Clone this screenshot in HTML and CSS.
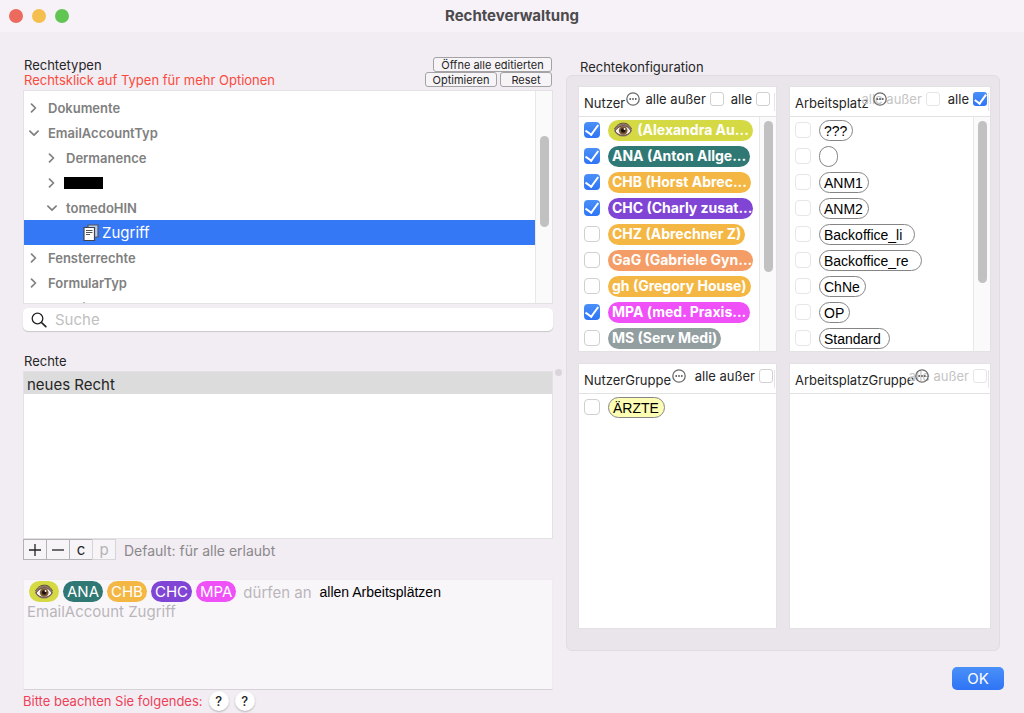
FILE: index.html
```html
<!DOCTYPE html>
<html lang="de">
<head>
<meta charset="utf-8">
<title>Rechteverwaltung</title>
<link rel="stylesheet" href="styles.css">
</head>
<body>
<svg class="defs" aria-hidden="true">
  <symbol id="eye" viewBox="0 0 20 16">
    <path d="M1 8.5C3.5 3.5 7 1.500 10.500 1.500S17 4 19 8.500C17 12.500 14 14.500 10 14.500S3 12.500 1 8.500Z" fill="#8c7468"/>
    <path d="M2 9C4.500 5.500 7 4 10.300 4S16 5.500 18 9C16 12 13.500 13.200 10 13.200S4 12 2 9Z" fill="#f6f1ee" stroke="#4a3a34" stroke-width=".8"/>
    <circle cx="10.200" cy="8.500" r="4.300" fill="#7d5530"/>
    <circle cx="10.200" cy="8.500" r="2.300" fill="#1c1411"/>
    <circle cx="11.500" cy="7" r=".9" fill="#fff"/>
    <path d="M1.500 7C4 2.500 7 1.200 10.500 1.200S16.500 3 18.500 7" fill="none" stroke="#5c4840" stroke-width="1"/>
  </symbol>
  <symbol id="more" viewBox="0 0 14 14">
    <circle cx="7" cy="7" r="6.200" fill="none" stroke="#6b6b6b" stroke-width="1.300"/>
    <circle cx="4.200" cy="7" r=".9" fill="#555"/><circle cx="7" cy="7" r=".9" fill="#555"/><circle cx="9.800" cy="7" r=".9" fill="#555"/>
  </symbol>
  <symbol id="right" viewBox="0 0 10 10">
    <path d="M2.500 1.200 6.500 5 2.500 8.800" fill="none" stroke="#808080" stroke-width="1.700" stroke-linecap="round" stroke-linejoin="round"/>
  </symbol>
  <symbol id="down" viewBox="0 0 10 10">
    <path d="M.9 3.200 5 7.200 9.100 3.200" fill="none" stroke="#808080" stroke-width="1.700" stroke-linecap="round" stroke-linejoin="round"/>
  </symbol>
</svg>
<div class="window">
  <header class="titlebar">
    <div class="lights"><span class="light light-close"></span><span class="light light-min"></span><span class="light light-max"></span></div>
    <h1 class="title">Rechteverwaltung</h1>
  </header>
  <main class="main">
    <section class="left">
      <div class="types-head">
        <div>
          <h2 class="label">Rechtetypen</h2>
          <p class="hint">Rechtsklick auf Typen für mehr Optionen</p>
        </div>
        <div class="tools">
          <button class="tool tool-wide">Öffne alle editierten</button>
          <button class="tool tool-mid">Optimieren</button>
          <button class="tool">Reset</button>
        </div>
      </div>
      <div class="tree">
        <ul class="rows">
          <li class="row"><svg class="chev"><use href="#right"/></svg>Dokumente</li>
          <li class="row"><svg class="chev"><use href="#down"/></svg>EmailAccountTyp</li>
          <li class="row row-sub"><svg class="chev"><use href="#right"/></svg>Dermanence</li>
          <li class="row row-sub"><svg class="chev"><use href="#right"/></svg><span class="redacted"></span></li>
          <li class="row row-sub"><svg class="chev"><use href="#down"/></svg>tomedoHIN</li>
          <li class="row row-active">
            <svg class="doc" viewBox="0 0 16 18"><path d="M5 3V1H15V13H12.500" fill="#b9cbef" stroke="#555" stroke-width="1.200"/><path d="M1 3.500H11.500V16.500H1Z" fill="#fff" stroke="#444" stroke-width="1.200"/><path d="M3 6.500H9.500M3 8.500H9.500M3 10.500H7" stroke="#555" stroke-width="1"/></svg>Zugriff</li>
          <li class="row"><svg class="chev"><use href="#right"/></svg>Fensterrechte</li>
          <li class="row"><svg class="chev"><use href="#right"/></svg>FormularTyp</li>
          <li class="row"><svg class="chev"><use href="#right"/></svg>Kartei</li>
        </ul>
        <div class="track"><div class="thumb thumb-tree"></div></div>
      </div>
      <label class="search">
        <svg class="lens" viewBox="0 0 16 16"><circle cx="6.500" cy="6.500" r="5.300" fill="none" stroke="#222" stroke-width="1.300"/><path d="M10.500 10.500 14.800 14.600" stroke="#222" stroke-width="1.700" stroke-linecap="round"/></svg>
        <input class="search-input" type="text" placeholder="Suche" aria-label="Suche">
      </label>
      <h2 class="label label-rights">Rechte</h2>
      <div class="rights"><div class="right-item">neues Recht</div><span class="handle"></span></div>
      <div class="actions">
        <button class="act" aria-label="Hinzufügen"><svg class="sign" viewBox="0 0 12 12"><path d="M6 0V12M0 6H12" stroke="#222" stroke-width="1.300"/></svg></button>
        <button class="act" aria-label="Entfernen"><svg class="sign" viewBox="0 0 12 12"><path d="M0 6H12" stroke="#222" stroke-width="1.300"/></svg></button>
        <button class="act">c</button>
        <button class="act" disabled>p</button>
        <span class="default">Default: für alle erlaubt</span>
      </div>
      <div class="summary">
        <div class="tokens">
          <span class="token lime"><svg class="eye"><use href="#eye"/></svg></span>
          <span class="token teal">ANA</span>
          <span class="token amber">CHB</span>
          <span class="token violet">CHC</span>
          <span class="token pink">MPA</span>
          <span class="may">dürfen an</span>
          <span class="places">allen Arbeitsplätzen</span>
        </div>
        <div class="object">EmailAccount Zugriff</div>
      </div>
      <div class="note"><span>Bitte beachten Sie folgendes:</span><button class="help">?</button><button class="help">?</button></div>
    </section>
    <section class="right">
      <h2 class="label label-config">Rechtekonfiguration</h2>
      <div class="panel">
        <section class="box">
          <header class="box-head">
            <h3 class="box-title">Nutzer</h3><svg class="more"><use href="#more"/></svg>
            <div class="opts opts-user"><label class="opt">alle außer<input class="check check-s" type="checkbox"></label><label class="opt">alle<input class="check check-s" type="checkbox"></label></div>
          </header>
          <div class="box-body">
            <ul class="list">
              <li><label class="item"><input class="check" type="checkbox" checked><span class="pill lime"><svg class="eye"><use href="#eye"/></svg> (Alexandra Au...</span></label></li>
              <li><label class="item"><input class="check" type="checkbox" checked><span class="pill teal">ANA (Anton Allge...</span></label></li>
              <li><label class="item"><input class="check" type="checkbox" checked><span class="pill amber">CHB (Horst Abrec...</span></label></li>
              <li><label class="item"><input class="check" type="checkbox" checked><span class="pill violet">CHC (Charly zusat...</span></label></li>
              <li><label class="item"><input class="check" type="checkbox"><span class="pill amber">CHZ (Abrechner Z)</span></label></li>
              <li><label class="item"><input class="check" type="checkbox"><span class="pill orange">GaG (Gabriele Gyn...</span></label></li>
              <li><label class="item"><input class="check" type="checkbox"><span class="pill amber">gh (Gregory House)</span></label></li>
              <li><label class="item"><input class="check" type="checkbox" checked><span class="pill pink">MPA (med. Praxis...</span></label></li>
              <li><label class="item"><input class="check" type="checkbox"><span class="pill gray">MS (Serv Medi)</span></label></li>
            </ul>
            <div class="track"><div class="thumb thumb-user"></div></div>
          </div>
        </section>
        <section class="box">
          <header class="box-head box-head-place">
            <h3 class="box-title">Arbeitsplatz</h3><svg class="more"><use href="#more"/></svg>
            <div class="opts"><label class="opt opt-off">alle außer<input class="check check-s" type="checkbox" disabled></label><label class="opt">alle<input class="check check-s" type="checkbox" checked></label></div>
          </header>
          <div class="box-body">
            <ul class="list">
              <li><label class="item"><input class="check" type="checkbox" disabled><span class="place">???</span></label></li>
              <li><label class="item"><input class="check" type="checkbox" disabled aria-label="Ohne Namen"><span class="place"></span></label></li>
              <li><label class="item"><input class="check" type="checkbox" disabled><span class="place">ANM1</span></label></li>
              <li><label class="item"><input class="check" type="checkbox" disabled><span class="place">ANM2</span></label></li>
              <li><label class="item"><input class="check" type="checkbox" disabled><span class="place place-long">Backoffice_li</span></label></li>
              <li><label class="item"><input class="check" type="checkbox" disabled><span class="place place-long">Backoffice_re</span></label></li>
              <li><label class="item"><input class="check" type="checkbox" disabled><span class="place">ChNe</span></label></li>
              <li><label class="item"><input class="check" type="checkbox" disabled><span class="place">OP</span></label></li>
              <li><label class="item"><input class="check" type="checkbox" disabled><span class="place place-mid">Standard</span></label></li>
            </ul>
            <div class="track"><div class="thumb thumb-place"></div></div>
          </div>
        </section>
        <section class="box">
          <header class="box-head">
            <h3 class="box-title">NutzerGruppe</h3><svg class="more"><use href="#more"/></svg>
            <div class="opts"><label class="opt">alle außer<input class="check check-s" type="checkbox"></label></div>
          </header>
          <ul class="list">
            <li><label class="item"><input class="check" type="checkbox"><span class="place group">ÄRZTE</span></label></li>
          </ul>
        </section>
        <section class="box">
          <header class="box-head">
            <h3 class="box-title">ArbeitsplatzGruppe</h3><svg class="more"><use href="#more"/></svg>
            <div class="opts"><label class="opt opt-off">alle außer<input class="check check-s" type="checkbox" disabled></label></div>
          </header>
        </section>
      </div>
      <button class="ok">OK</button>
    </section>
  </main>
</div>
</body>
</html>
```
FILE: styles.css
```css
* { box-sizing: border-box; }
body { margin: 0; background: #f2edf3; color: #262626; font: 13px/16px Inter, sans-serif; }
h1, h2, h3, p, ul { margin: 0; padding: 0; font-weight: 400; list-style: none; }
button, input { font: inherit; color: inherit; margin: 0; }
.defs { display: none; }

.window { display: flex; flex-direction: column; min-height: 100vh; }
.titlebar { display: grid; grid-template-columns: 1fr auto 1fr; align-items: center; height: 32px; padding: 0 9px; background: #f7f2f8; }
.lights { display: flex; gap: 9px; }
.light { width: 14px; height: 14px; border-radius: 50%; }
.light-close { background: #ed6a5e; }
.light-min { background: #f5bf4f; }
.light-max { background: #61c554; }
.title { font-size: 15px; font-weight: 700; color: #4c4a4d; }

.main { flex: 1; display: grid; grid-template-columns: minmax(0, 530fr) minmax(0, 434fr); gap: 13px; padding: 25px 24px 2px 23px; }
.left, .right { display: flex; flex-direction: column; }
.label { font-size: 13px; line-height: 16px; }

.types-head { display: flex; justify-content: space-between; height: 33px; padding: 0 1px; }
.hint { line-height: 14px; color: #fa4a3c; }
.tools { display: flex; flex-wrap: wrap; justify-content: flex-end; column-gap: 3px; width: 130px; align-content: flex-start; }
.tool { height: 15px; width: 52px; padding: 0; font-size: 11px; line-height: 12px; border: 1px solid #a5a2a6; border-radius: 3px; background: #f7f4f8; white-space: nowrap; }
.tool-wide { width: 119px; }
.tool-mid { width: 72px; }

.tree { display: flex; height: 214px; background: #fff; border: 1px solid #e4e1e5; overflow: hidden; }
.rows { flex: 1; padding-top: 4px; }
.row { display: flex; align-items: center; gap: 9px; height: 25px; padding-left: 5px; color: #808080; font-weight: 600; white-space: nowrap; }
.row-sub { padding-left: 23px; }
.row-active { padding-left: 59px; gap: 3px; background: #3478f6; color: #fff; font-size: 15px; font-weight: 400; }
.chev { width: 10px; height: 10px; }
.doc { width: 16px; height: 18px; }
.redacted { width: 39px; height: 12px; margin-left: -2px; background: #000; }
.track { width: 17px; padding: 4px 4px 0; background: #fafafa; border-left: 1px solid #e8e8e8; }
.thumb { width: 9px; border-radius: 5px; background: #c1c1c1; }
.thumb-tree { height: 91px; margin-top: 41px; }
.thumb-user { height: 151px; }
.thumb-place { height: 162px; }

.search { display: flex; align-items: center; gap: 8px; height: 23px; margin-top: 4px; padding-left: 8px; background: #fff; border-radius: 5px; box-shadow: 0 1px 1px #c9c5ca; }
.lens { width: 16px; height: 16px; }
.search-input { flex: 1; min-width: 0; border: 0; padding: 0; background: none; font-size: 15px; outline: 0; }
.search-input::placeholder { color: #bfbfbf; }

.label-rights { margin: 22px 0 2px; padding-left: 1px; }
.rights { position: relative; flex: 1; min-height: 80px; background: #fff; border: 1px solid #e4e1e5; }
.right-item { height: 22px; padding-left: 3px; line-height: 25px; font-size: 15px; background: #dcdcdc; }
.handle { position: absolute; right: -10px; top: -3px; width: 7px; height: 7px; border-radius: 50%; background: #d9d5da; }
.actions { display: flex; align-items: center; height: 21px; }
.act { width: 24px; height: 21px; margin-right: -1px; padding: 0; font-size: 15px; line-height: 18px; border: 1px solid #b5b2b6; background: #f7f4f8; }
.act:disabled { border-color: #d8d5d9; color: #b5b2b6; }
.sign { display: block; width: 12px; height: 12px; margin: 0 auto; }
.default { margin-left: 9px; padding-top: 3px; font-size: 14px; color: #8b888c; }
.summary { height: 111px; margin-top: 19px; padding: 1px 3px; background: #f9f6fa; border: 1px solid #efebf0; border-bottom-color: #d5d2d6; font-size: 15px; }
.tokens { display: flex; align-items: center; gap: 4px; padding-left: 2px; white-space: nowrap; }
.token { height: 21px; padding: 0 4px; border-radius: 11px; line-height: 22px; color: #fff; }
.eye { width: 22px; height: 16px; vertical-align: -3px; }
.may, .object { color: #b9b6ba; }
.may { margin-left: 3px; padding-top: 3px; }
.places { margin-left: 4px; color: #000; font: 14px/16px "Liberation Sans", sans-serif; }
.object { line-height: 20px; }
.note { display: flex; align-items: center; gap: 6px; height: 20px; margin-top: 1px; color: #ee3f58; }
.help { width: 20px; height: 20px; padding: 0; border: 0; border-radius: 50%; background: #fff; box-shadow: 0 1px 2px #b5b2b6; color: #222; font-weight: 500; }

.label-config { margin: 2px 0 0; padding-left: 14px; }
.panel { flex: 1; display: grid; grid-template-columns: minmax(0, 199fr) minmax(0, 202fr); grid-template-rows: 267fr 266fr; gap: 11px 12px; padding: 10px 8px 21px 11px; background: #e9e5ea; border: 1px solid #e0dce1; border-radius: 6px; }
.box { display: flex; flex-direction: column; background: #fff; border: 1px solid #e4e1e5; }
.box-head { position: relative; display: flex; align-items: center; gap: 1px; height: 30px; padding-left: 5px; border-bottom: 1px solid #e2e2e2; }
.box-head-place { gap: 4px; }
.box-head::after { content: ""; position: absolute; right: 1px; top: 6px; width: 1px; height: 18px; background: #e5e5e5; }
.box-title { padding-top: 2px; font-size: 13px; }
.more { position: relative; z-index: 1; width: 14px; height: 14px; margin-bottom: 5px; }
.opts { position: absolute; right: 3px; top: 4px; display: flex; gap: 8px; }
.opts-user { right: 6px; gap: 7px; }
.opt { display: flex; align-items: center; gap: 4px; white-space: nowrap; }
.opt-off { color: #c4c4c4; }
.box-body { flex: 1; display: flex; }
.list { flex: 1; min-width: 0; }
.item { display: flex; align-items: center; gap: 8px; height: 26px; padding-left: 5px; }
.check { appearance: none; position: relative; flex: none; width: 16px; height: 16px; border: 1px solid #d0d0d0; border-radius: 4px; background: #fff; }
.check-s { width: 14px; height: 14px; border-radius: 3px; }
.check:disabled { border-color: #e6e6e6; }
.check:checked { display: grid; place-items: center; border: 0; background: linear-gradient(#4a90f8, #2f74f5); }
.check:checked::after { content: ""; width: 6px; height: 11px; margin-bottom: 3px; border: solid #fff; border-width: 0 2px 2px 0; transform: rotate(36deg); }
.check-s:checked::after { width: 5px; height: 10px; }
.pill { max-width: 145px; height: 21px; padding: 0 4px; border-radius: 11px; line-height: 19px; font-size: 14px; font-weight: 700; color: #fff; white-space: nowrap; }
.lime { background: #d5d944; }
.teal { background: #2f7874; }
.amber { background: #f4b744; }
.violet { background: #8145d5; }
.pink { background: #ef50f7; }
.orange { background: #f49d66; }
.gray { background: #929e9f; }
.place { min-width: 19px; height: 21px; padding: 0 5px 0 4px; border: 1px solid #858585; border-radius: 11px; background: #fff; color: #000; font: 14px/20px "Liberation Sans", sans-serif; white-space: nowrap; }
.place-mid { padding-right: 8px; }
.place-long { padding-right: 12px; }
.group { background: #fdfdb4; }
.ok { align-self: flex-end; width: 52px; height: 23px; margin: 16px -4px 21px 0; padding: 0; border: 0; border-radius: 5px; background: linear-gradient(#4a90f8, #2f74f5); color: #fff; font-size: 15px; }
```
